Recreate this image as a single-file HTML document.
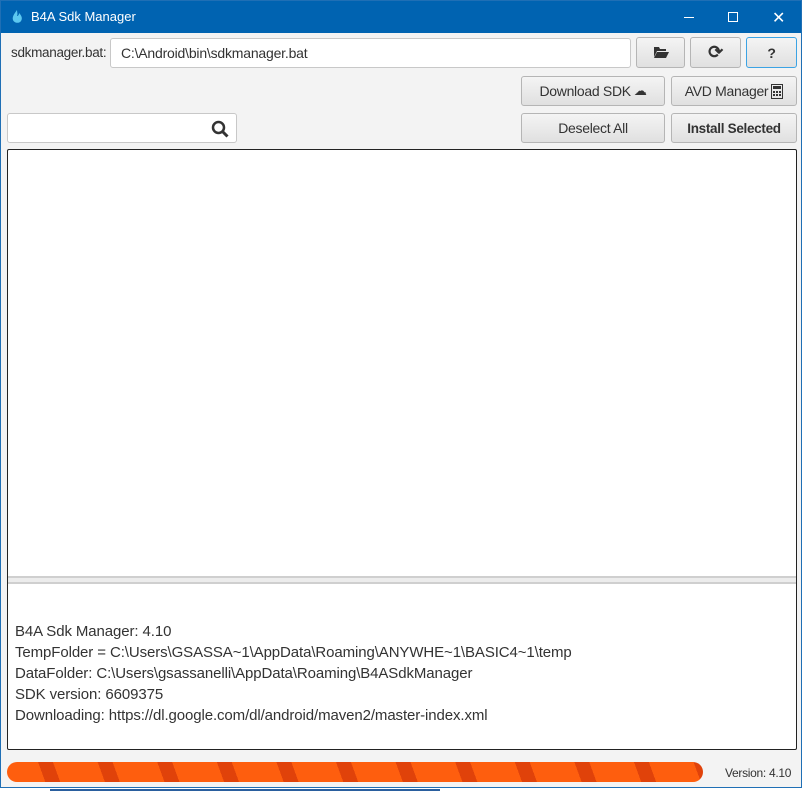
<!DOCTYPE html>
<html><head><style>
*{box-sizing:border-box;margin:0;padding:0}
body{width:804px;height:796px;overflow:hidden;background:#fff;font-family:"Liberation Sans",sans-serif;position:relative}
.win{position:absolute;left:0;top:0;width:802px;height:788px;background:#f3f3f3;border:1px solid #1f6fb5}
.title{position:absolute;left:0;top:0;width:800px;height:32px;background:#0063b1;color:#fff;font-size:13px}
.abs{position:absolute}
.btn{position:absolute;background:linear-gradient(#f4f4f4,#e0e0e0);border:1px solid #b5b5b5;border-radius:3px;font-size:14px;color:#333;display:flex;align-items:center;justify-content:center;letter-spacing:-0.3px}
.txt{position:absolute;background:#fff;border:1px solid #c8c8c8;border-radius:3px}
.log{font-size:15px;color:#333;line-height:21px;letter-spacing:-0.1px}
</style></head><body>
<div class="abs" style="left:0;top:788px;width:804px;height:8px;background:#fff"></div>
<div class="abs" style="left:50px;top:789px;width:390px;height:6px;border-top:2px solid #2a5f9e"></div>
<div class="win">
<div class="title">
 <svg class="abs" style="left:10px;top:8px" width="12" height="16" viewBox="0 0 12 16"><path d="M6 1C3 5 1 8 2 11c1 3 6 4 8 1 2-3 0-6-2-8 0 2-1 3-2 3 1-2 0-4 0-6z" fill="#5cc8f0"/></svg>
 <span class="abs" style="left:30px;top:8px">B4A Sdk Manager</span>
 <div class="abs" style="left:683px;top:16px;width:10px;height:1px;background:#fff"></div>
 <div class="abs" style="left:727px;top:11px;width:10px;height:10px;border:1px solid #fff"></div>
 <span class="abs" style="left:771px;top:7px;font-size:16px">✕</span>
</div>
<span class="abs" style="left:10px;top:44px;font-size:13.5px;color:#333;letter-spacing:-0.3px">sdkmanager.bat:</span>
<div class="txt" style="left:109px;top:37px;width:521px;height:30px"><span class="abs" style="left:10px;top:6px;font-size:14px;color:#333;letter-spacing:-0.2px">C:\Android\bin\sdkmanager.bat</span></div>
<div class="btn" style="left:635px;top:36px;width:49px;height:31px"><svg width="16" height="13" viewBox="0 0 16 13"><path d="M1 1h5l1 2h6v2H4L1 11z" fill="#333"/><path d="M4 6h12l-3 6H1z" fill="#333"/></svg></div>
<div class="btn" style="left:689px;top:36px;width:51px;height:31px;font-size:18px;font-weight:bold">⟳</div>
<div class="btn" style="left:745px;top:36px;width:51px;height:31px;border:1.5px solid #3ba3e4;font-weight:bold;font-size:14px">?</div>
<div class="btn" style="left:520px;top:75px;width:144px;height:30px">Download SDK <span style="font-size:13px;margin-left:3px">☁</span></div>
<div class="btn" style="left:670px;top:75px;width:126px;height:30px">AVD Manager <svg style="margin-left:3px" width="12" height="15" viewBox="0 0 12 15"><rect x="0.5" y="0.5" width="11" height="14" fill="none" stroke="#333"/><rect x="2" y="2" width="8" height="3" fill="#333"/><g fill="#333"><rect x="2" y="7" width="2" height="2"/><rect x="5" y="7" width="2" height="2"/><rect x="8" y="7" width="2" height="2"/><rect x="2" y="10" width="2" height="2"/><rect x="5" y="10" width="2" height="2"/><rect x="8" y="10" width="2" height="2"/></g></svg></div>
<div class="txt" style="left:6px;top:112px;width:230px;height:30px"><svg class="abs" style="left:203px;top:6px" width="18" height="18" viewBox="0 0 18 18"><circle cx="7.5" cy="7.5" r="5.5" fill="none" stroke="#333" stroke-width="2.5"/><path d="M11.5 11.5l5 5" stroke="#333" stroke-width="3"/></svg></div>
<div class="btn" style="left:520px;top:112px;width:144px;height:30px">Deselect All</div>
<div class="btn" style="left:670px;top:112px;width:126px;height:30px;font-weight:bold;font-size:13.5px">Install Selected</div>
<div class="abs" style="left:6px;top:148px;width:790px;height:601px;border:1.5px solid #222;border-radius:2px;background:#fff"></div>
<div class="abs" style="left:7px;top:575px;width:788px;height:8px;background:#ececec;border-top:2px solid #cfcfcf;border-bottom:2px solid #cfcfcf"></div>
<div class="abs log" style="left:14px;top:620px">B4A Sdk Manager: 4.10<br>TempFolder = C:\Users\GSASSA~1\AppData\Roaming\ANYWHE~1\BASIC4~1\temp<br>DataFolder: C:\Users\gsassanelli\AppData\Roaming\B4ASdkManager<br>SDK version: 6609375<br>Downloading: https://dl.google.com/dl/android/maven2/master-index.xml</div>
<div class="abs" style="left:6px;top:761px;width:696px;height:20px;border-radius:10px;overflow:hidden;background:repeating-linear-gradient(70deg,#fe5e0e 0 36px,#e0420a 36px 50px,#fe5e0e 50px 56px)"></div>
<span class="abs" style="left:724px;top:765px;font-size:12px;color:#333;letter-spacing:-0.3px">Version: 4.10</span>
</div>
</body></html>
